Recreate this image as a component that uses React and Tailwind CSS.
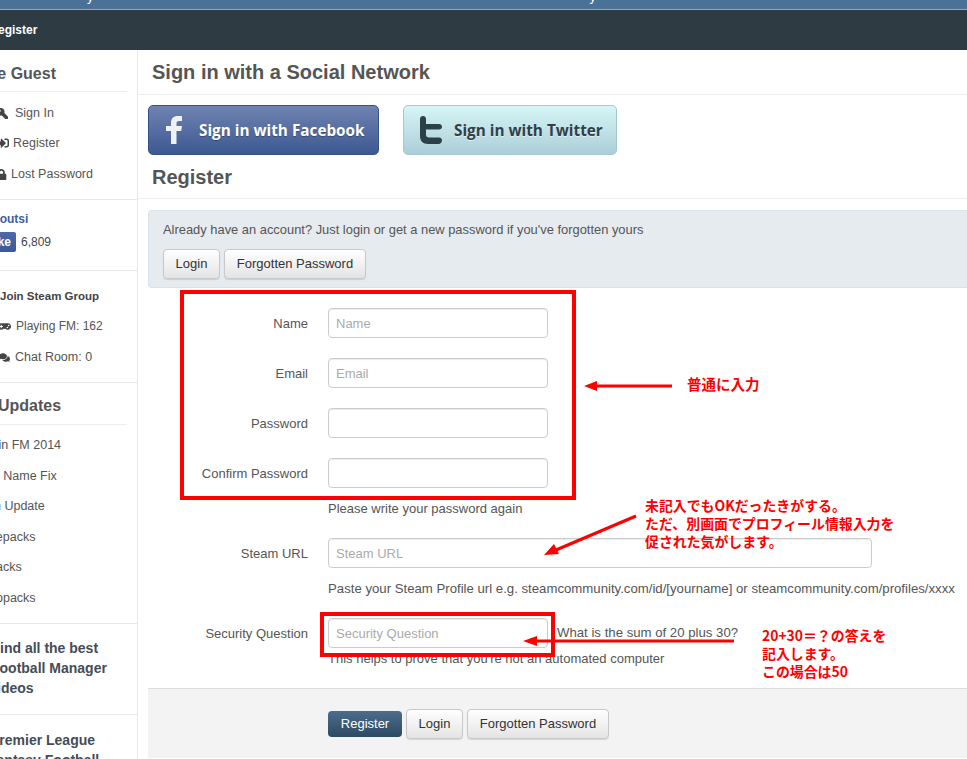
import React from "react";
import { FaKey, FaSignInAlt, FaLock, FaGamepad, FaComments } from "react-icons/fa";

const sans = "font-['Liberation_Sans',Arial,sans-serif]";

const Btn = ({ children, className = "" }) => (
  <button
    type="button"
    className={`h-[30px] rounded-[4px] border border-[#c8c8c8] bg-gradient-to-b from-white to-[#e4e4e4] text-[13px] text-[#333] shadow-[0_1px_1px_rgba(0,0,0,0.12)] ${className}`}
  >
    {children}
  </button>
);

const Field = ({ label, placeholder, wide }) => (
  <div className="flex items-center">
    <label className="w-[160px] pt-[1px] text-right text-[13px] text-[#555]">{label}</label>
    <input
      type="text"
      placeholder={placeholder}
      className={`ml-5 h-[30px] rounded-[4px] border border-[#ccc] bg-white px-[7px] text-[13px] shadow-[inset_0_1px_1px_rgba(0,0,0,0.08)] placeholder:text-[#aaa] ${wide ? "w-[544px]" : "w-[220px]"}`}
    />
  </div>
);

const Help = ({ children, className = "" }) => (
  <div className={`ml-[180px] flex h-5 items-center whitespace-nowrap text-[#555] ${className}`}>{children}</div>
);

const SideLink = ({ icon, children, className = "" }) => (
  <div className={`flex items-center whitespace-nowrap text-[12.5px] text-[#555] ${className}`}>
    {icon}
    {children}
  </div>
);

const Sidebar = () => (
  <aside className="w-[138px] shrink-0 overflow-hidden border-r border-[#e8e8e8] text-[#555]">
    {/* guest */}
    <div className="h-[150px] border-b border-[#e8e8e8]">
      <div className="mr-[10px] flex h-[42px] items-end justify-end border-b border-[#eee] pb-[5px] pr-[71px]">
        <span className="whitespace-nowrap text-[16px] font-bold">Welcome Guest</span>
      </div>
      <SideLink className="mt-[11px] h-[20px] gap-[7px]" icon={<FaKey className="-ml-[3px] -scale-x-100 text-[11px] text-[#444]" />}>Sign In</SideLink>
      <SideLink className="mt-[10px] h-[20px] gap-[4px]" icon={<FaSignInAlt className="-ml-[3px] text-[12px] text-[#444]" />}>Register</SideLink>
      <SideLink className="mt-[11px] h-[20px] gap-[4px]" icon={<FaLock className="-ml-[4px] text-[11px] text-[#444]" />}>Lost Password</SideLink>
    </div>
    {/* like box */}
    <div className="h-[71px] border-b border-[#e8e8e8] pt-[9px]">
      <div className="-ml-[15px] whitespace-nowrap text-[12px] font-bold leading-5 text-[#3b5ea5]">Scoutsi</div>
      <div className="mt-[3px] flex items-center gap-[5px]">
        <span className="flex h-5 w-4 items-center justify-end overflow-hidden rounded-r-[2px] bg-gradient-to-b from-[#4d69a8] to-[#3b5998] pr-[5px] text-[12px] font-bold text-white">ke</span>
        <span className="text-[12px] text-[#444]">6,809</span>
      </div>
    </div>
    {/* steam */}
    <div className="h-[112px] border-b border-[#e8e8e8] pt-[15px]">
      <div className="h-5 whitespace-nowrap text-[11.5px] font-bold leading-5 text-[#444]">Join Steam Group</div>
      <SideLink className="mt-[10px] h-5 gap-[5px] text-[12px]" icon={<FaGamepad className="-ml-[2px] text-[13px] text-[#444]" />}>Playing FM: 162</SideLink>
      <SideLink className="mt-[11px] h-5 gap-[5px]" icon={<FaComments className="-ml-[1px] text-[11px] text-[#444]" />}>Chat Room: 0</SideLink>
    </div>
    {/* updates */}
    <div className="h-[241px] border-b border-[#e8e8e8]">
      <div className="mr-[10px] flex h-[42px] items-end overflow-hidden border-b border-[#eee] pb-[6px]">
        <span className="-ml-[2px] whitespace-nowrap text-[16px] font-bold">Updates</span>
      </div>
      <div className="mt-[10px] flex flex-col gap-[10.6px] whitespace-nowrap text-[12.5px] leading-5">
        <div className="-ml-[1.5px]">in FM 2014</div>
        <div className="-ml-[3px]">l Name Fix</div>
        <div className="-ml-[6px]">n Update</div>
        <div className="-ml-[25px]">Facepacks</div>
        <div className="-ml-[4px]">acks</div>
        <div className="-ml-[4px]">opacks</div>
      </div>
    </div>
    {/* promo */}
    <div className="h-[91px] border-b border-[#e8e8e8] pt-[14px] text-[14px] font-bold leading-5 text-[#444c58]">
      <div className="-ml-[8.5px] whitespace-nowrap">Find all the best</div>
      <div className="-ml-[9px] whitespace-nowrap">Football Manager</div>
      <div className="-ml-[12px] whitespace-nowrap">Videos</div>
    </div>
    <div className="pt-[15px] text-[14px] font-bold leading-5 text-[#444c58]">
      <div className="-ml-[10px] whitespace-nowrap">Premier League</div>
      <div className="-ml-[12px] whitespace-nowrap">Fantasy Football</div>
    </div>
  </aside>
);

const SocialButtons = () => (
  <div className="flex h-[50px] gap-6 pl-[10px] font-['Open_Sans',sans-serif] text-[15.3px] font-bold">
    <a className="flex w-[231px] items-center rounded-[5px] border border-[#34518c] bg-gradient-to-b from-[#6f83b1] to-[#3d5992] text-white [text-shadow:0_1px_1px_rgba(0,0,0,0.3)]">
      <svg viewBox="0 0 16 28" className="ml-[17px] h-[28px] w-[16px]">
        <path d="M5 28V15H0v-5h5V7c0-4.500 2.500-7 7-7h4v5h-3c-2 0-2.500 1-2.500 2.500V10H16l-.8 5h-4.700v13z" fill="#eef1f6" />
      </svg>
      <span className="ml-[17px] whitespace-nowrap">Sign in with Facebook</span>
    </a>
    <a className="flex w-[214px] items-center rounded-[5px] border border-[#a5c8cf] bg-gradient-to-b from-[#d6f6f6] to-[#acced8] text-[#2e4049] [text-shadow:0_1px_0_rgba(255,255,255,0.6)]">
      <svg viewBox="0 0 22 28" className="ml-[16px] h-[28px] w-[22px]">
        <path d="M0 3C0 1 1.300 0 3 0s3 1 3 3v5h13c1.800 0 3 1.200 3 2.800s-1.200 2.700-3 2.700H6v5c0 2 1 3 3 3h10c1.800 0 3 1.200 3 2.800S20.800 28 19 28H8c-5 0-8-3-8-8z" fill="#2c4048" />
      </svg>
      <span className="ml-[12px] whitespace-nowrap">Sign in with Twitter</span>
    </a>
  </div>
);

// red marks drawn on top of the screenshot
const Annotations = () => (
  <div className="pointer-events-none absolute inset-0 font-['Noto_Sans_CJK_JP',sans-serif] text-[13.9px] font-bold leading-[18px] text-[#f00]">
    <div className="absolute left-[180px] top-[290px] h-[210px] w-[396px] border-4 border-[#f00]" />
    <div className="absolute left-[320px] top-[612px] h-[45px] w-[235px] border-4 border-[#f00]" />
    <svg className="absolute inset-0 h-[759px] w-[967px]" viewBox="0 0 967 759">
      <path d="M672 386H596" stroke="#f00" strokeWidth="3" />
      <path d="M584 386l13-5v10z" fill="#f00" />
      <path d="M636 516L556 550" stroke="#f00" strokeWidth="3" />
      <path d="M544 555l10-11 5 10z" fill="#f00" />
      <path d="M734 641H535" stroke="#f00" strokeWidth="3" />
      <path d="M523 641l14-5v10z" fill="#f00" />
    </svg>
    <div className="absolute left-[687px] top-[375px] text-[14.5px]">普通に入力</div>
    <div className="absolute left-[645px] top-[496px] whitespace-nowrap">
      未記入でもOKだったきがする。
      <br />
      ただ、別画面でプロフィール情報入力を
      <br />
      促された気がします。
    </div>
    <div className="absolute left-[762px] top-[626px] whitespace-nowrap">
      20+30＝？の答えを
      <br />
      記入します。
      <br />
      この場合は50
    </div>
  </div>
);

export default function App() {
  return (
    <div className={`relative h-[759px] w-[967px] overflow-hidden bg-white ${sans}`}>
      <div className="flex h-[10px] overflow-hidden border-b border-[#8fabc0] bg-[#4a7298] text-[13px] leading-none text-white">
        <span className="ml-[87px] -mt-[10px] h-[13px]">y</span>
        <span className="ml-[496px] -mt-[10px] h-[13px]">y</span>
      </div>
      <div className="flex h-10 items-center bg-[#2e3b43] text-[12px] font-bold text-white">
        <span className="-ml-[10.7px]">Register</span>
      </div>

      <div className="flex">
        <Sidebar />

        <main className="min-w-0 flex-1">
          <div className="flex h-[45px] items-center border-b border-[#eee] pl-[14px] text-[20px] font-bold text-[#555]">
            Sign in with a Social Network
          </div>
          <div className="mt-[10px]">
            <SocialButtons />
          </div>
          <div className="flex h-[44px] items-center border-b border-[#eee] pl-[14px] text-[20px] font-bold text-[#555]">
            Register
          </div>

          <div className="pl-[10px] pt-[11px]">
            <div className="h-[78px] rounded-l-[4px] border border-r-0 border-[#dbe2e7] bg-[#e6ebef] pl-[14px] pt-[9px] text-[12.9px] text-[#555]">
              <div className="flex h-5 items-center">
                Already have an account? Just login or get a new password if you've forgotten yours
              </div>
              <div className="mt-[9px] flex gap-1">
                <Btn className="w-[57px]">Login</Btn>
                <Btn className="w-[142px]">Forgotten Password</Btn>
              </div>
            </div>

            <div className="flex flex-col pt-5">
              <div className="flex flex-col gap-5">
                <Field label="Name" placeholder="Name" />
                <Field label="Email" placeholder="Email" />
                <Field label="Password" />
                <Field label="Confirm Password" />
              </div>
              <div className="mt-[10px]">
                <Help className="pt-[1px] text-[13px]">Please write your password again</Help>
              </div>
              <div className="mt-5">
                <Field label="Steam URL" placeholder="Steam URL" wide />
              </div>
              <div className="mt-[10px]">
                <Help className="pt-[1px] text-[13.2px]">Paste your Steam Profile url e.g. steamcommunity.com/id/[yourname] or steamcommunity.com/profiles/xxxx</Help>
              </div>
              <div className="mt-5 flex items-center">
                <Field label="Security Question" placeholder="Security Question" />
                <span className="ml-[9px] text-[13.2px] text-[#555]">What is the sum of 20 plus 30?</span>
              </div>
              <div className="mt-[1px]">
                <Help className="text-[13px]">This helps to prove that you're not an automated computer</Help>
              </div>
            </div>

            <div className="mt-[19px] flex h-[70px] items-center gap-1 border-t border-[#ddd] bg-[#f3f3f3] pl-[180px]">
              <button
                type="button"
                className="h-[26px] w-[74px] rounded-[4px] bg-gradient-to-b from-[#4c6d8d] to-[#2d4963] text-[13px] text-white"
              >
                Register
              </button>
              <Btn className="w-[57px]">Login</Btn>
              <Btn className="w-[142px]">Forgotten Password</Btn>
            </div>
          </div>
        </main>
      </div>

      <Annotations />
    </div>
  );
}
